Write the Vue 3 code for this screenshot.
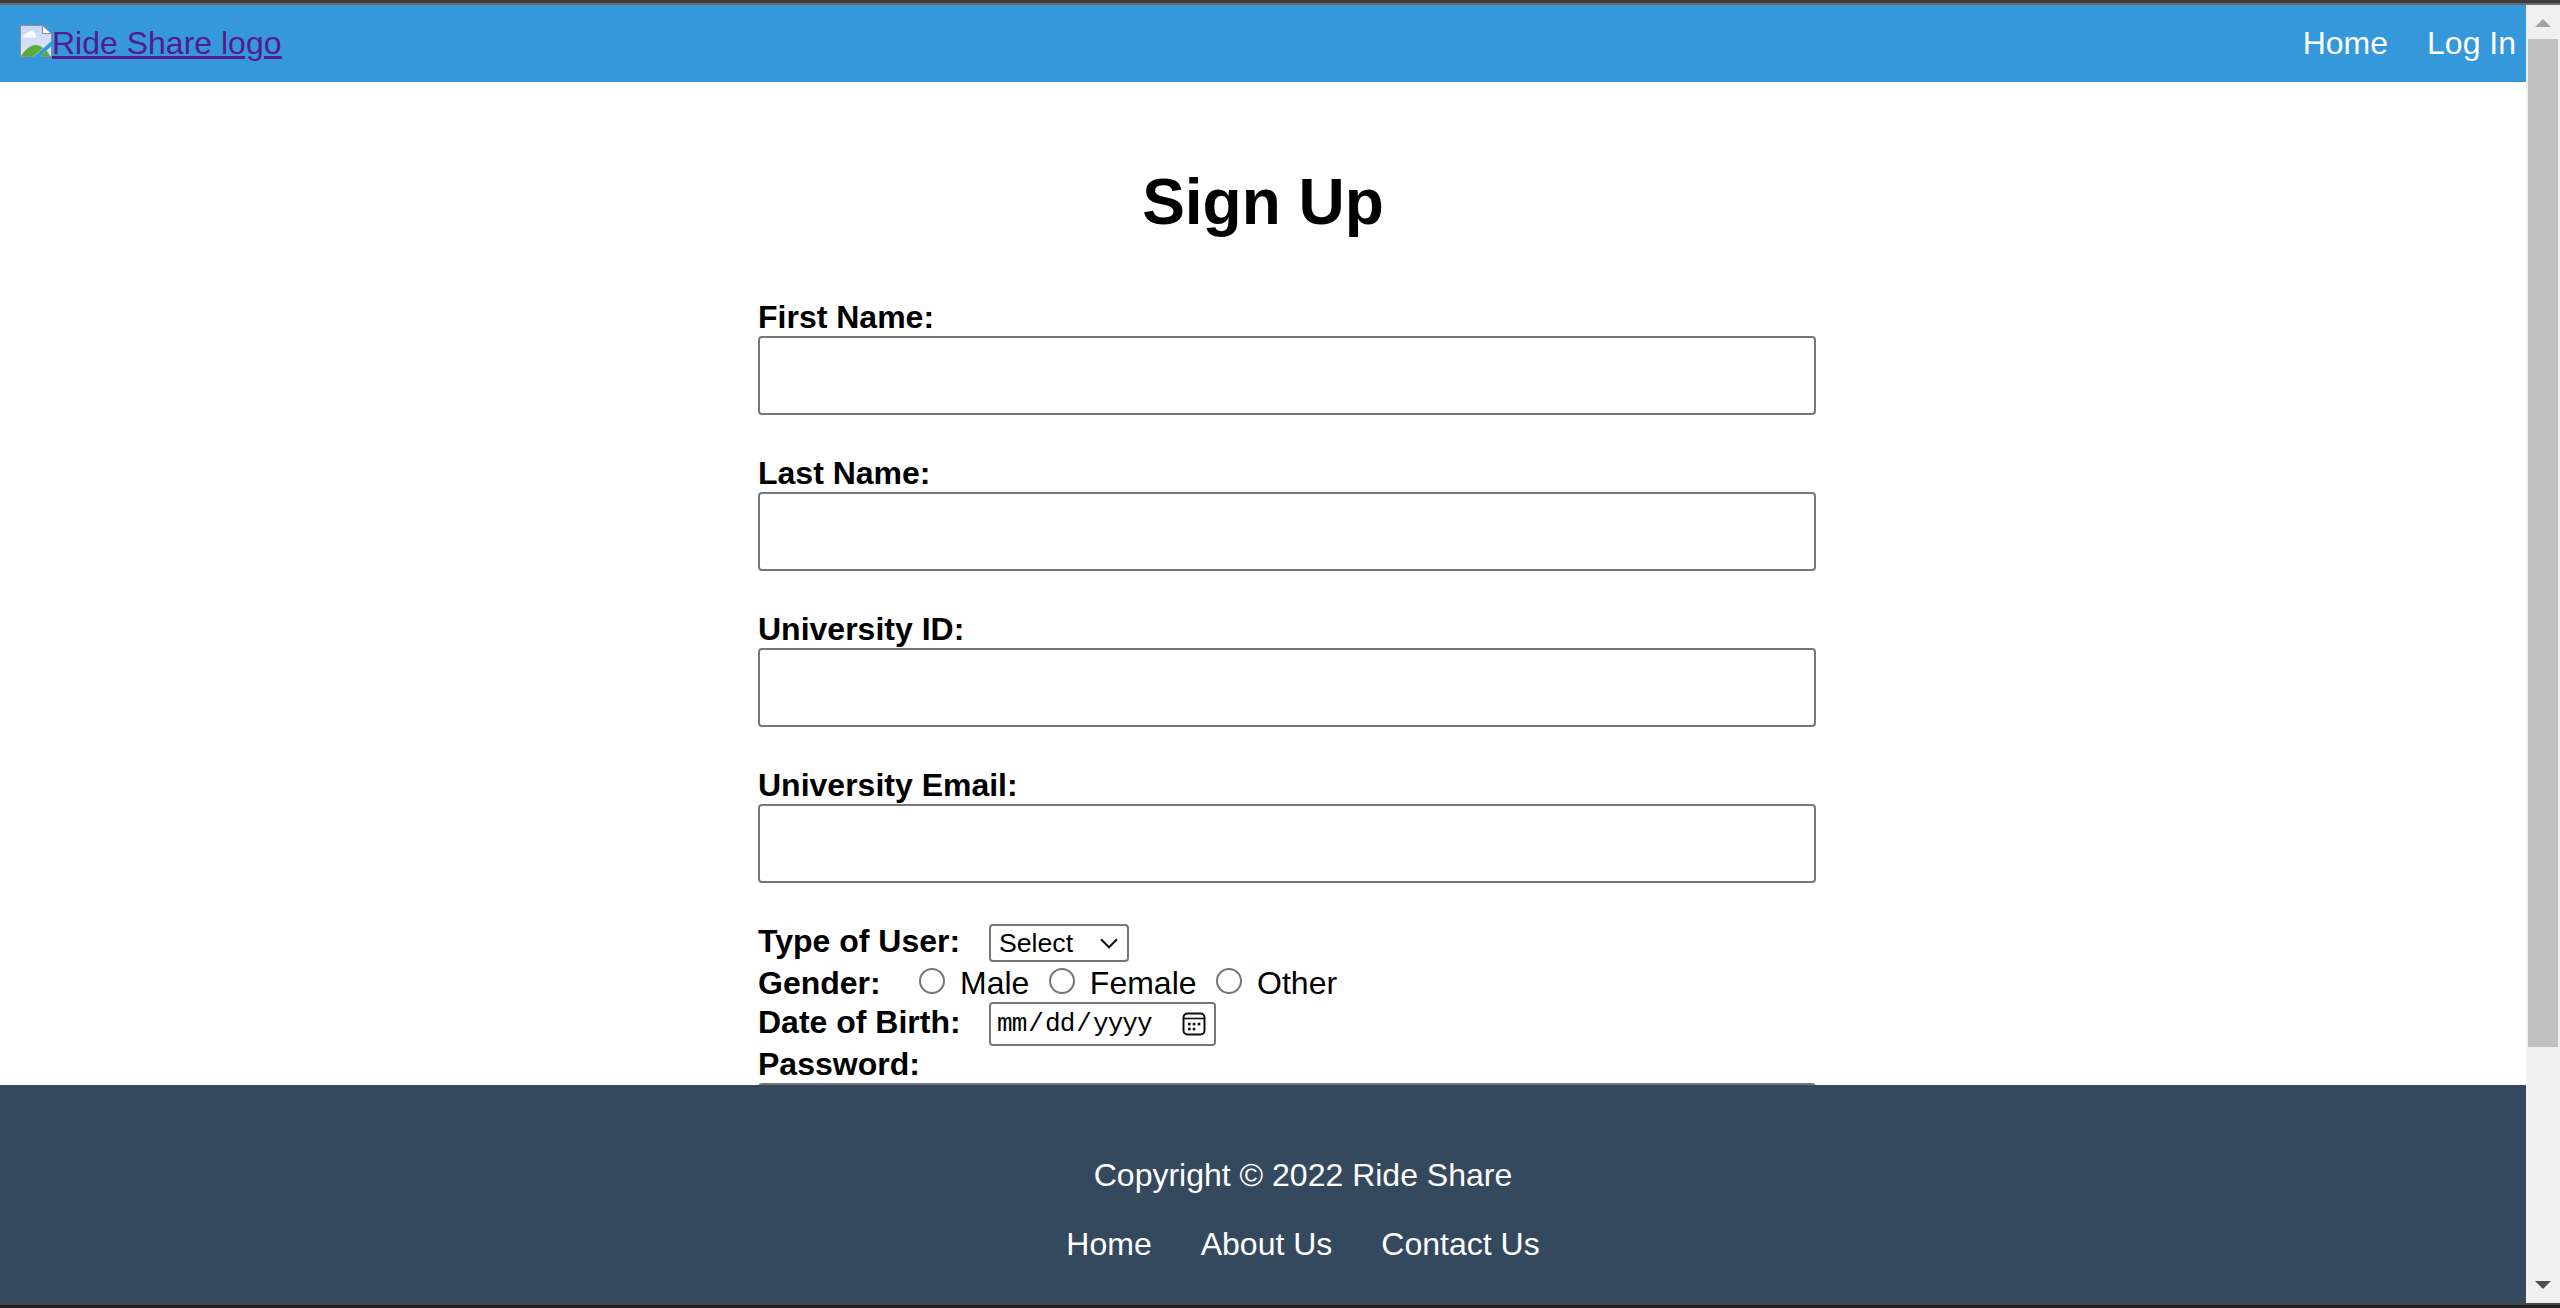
<script setup>
import { reactive } from 'vue'

const fields = [
  { id: 'firstName', label: 'First Name:', type: 'text' },
  { id: 'lastName', label: 'Last Name:', type: 'text' },
  { id: 'universityId', label: 'University ID:', type: 'text' },
  { id: 'email', label: 'University Email:', type: 'email' },
]
const genders = ['Male', 'Female', 'Other']
const navLinks = ['Home', 'Log In']
const footerLinks = ['Home', 'About Us', 'Contact Us']
const form = reactive({ firstName: '', lastName: '', universityId: '', email: '', gender: '', password: '' })
</script>

<template>
  <div class="window">
    <div class="edge-top"></div>
    <div class="viewport">
      <div class="page">
        <header class="header">
          <a class="logo" href="#">
            <svg class="broken" width="32" height="32" viewBox="0 0 32 32">
              <defs>
                <linearGradient id="sky" x1="0" y1="0" x2="0" y2="1">
                  <stop offset="0" stop-color="#c5d6f6" />
                  <stop offset="1" stop-color="#dfe8fb" />
                </linearGradient>
              </defs>
              <path d="M.5.5H22.500L31.500 8.500V16L14 31.500H.5Z" fill="url(#sky)" />
              <path d="M3 12.500c0-2 1.500-3.500 3.500-3.500C7.500 7 9 6 11 6c2.500 0 4 1.500 4.500 3.500 0 .8.500 1.500.5 3Z" fill="#fff" />
              <path d="M1 31C5 25 10 20 15.500 20c3 0 5.500 1 7.500 3L14 31Z" fill="#58ad38" />
              <path d="M21 31L27 26 30 31Z" fill="#58ad38" />
              <path d="M31 21.500V31H20.500Z" fill="#d5e1f8" />
              <path d="M20.500 31L26.500 25.800C28 27.500 29 29 30 31Z" fill="#58ad38" />
              <path d="M22.500 1V8.500H31.500Z" fill="#fff" />
              <path d="M14 31.500H.5V.5H22.500L31.500 8.500V16M22.500.5V8.500H31.500M31.500 21V31.500H20" fill="none" stroke="#8f8f8f" />
            </svg>
            <span class="logo-text">Ride Share logo</span>
          </a>
          <nav class="nav">
            <a v-for="link in navLinks" :key="link" href="#">{{ link }}</a>
          </nav>
        </header>

        <main class="main">
          <h1>Sign Up</h1>
          <form class="form" @submit.prevent>
            <div v-for="f in fields" :key="f.id" class="field">
              <label :for="f.id">{{ f.label }}</label>
              <input :id="f.id" v-model="form[f.id]" :type="f.type" />
            </div>
            <div class="row row-user">
              <label class="wide">Type of User:</label>
              <div class="select">
                <span>Select</span>
                <svg width="18" height="11" viewBox="0 0 18 11">
                  <path d="M1 1.300L9 9.300L17 1.300" fill="none" stroke="#101010" stroke-width="2" />
                </svg>
              </div>
            </div>
            <div class="row row-gender">
              <label class="narrow">Gender:</label>
              <div v-for="g in genders" :key="g" class="option">
                <span class="radio" role="radio" @click="form.gender = g"></span>
                <span>{{ g }}</span>
              </div>
            </div>
            <div class="row row-date">
              <label class="wide">Date of Birth:</label>
              <div class="date">
                <span class="date-text"><span>mm</span>/<span>dd</span>/<span>yyyy</span></span>
                <svg width="24" height="24" viewBox="0 0 24 24">
                  <rect x="1.500" y="1.500" width="21" height="21" rx="4" fill="none" stroke="#101010" stroke-width="2" />
                  <path d="M2 6.500H22" stroke="#101010" stroke-width="1.600" />
                  <g fill="#101010">
                    <circle cx="7.300" cy="12" r="1.500" /><circle cx="12" cy="12" r="1.500" /><circle cx="17" cy="12" r="1.500" />
                    <circle cx="7.300" cy="17" r="1.500" /><circle cx="12" cy="17" r="1.500" />
                  </g>
                </svg>
              </div>
            </div>
            <div class="field">
              <label for="password">Password:</label>
              <input id="password" v-model="form.password" type="password" />
            </div>
          </form>
        </main>

        <footer class="footer">
          <p>Copyright © 2022 Ride Share</p>
          <nav>
            <a v-for="link in footerLinks" :key="link" href="#">{{ link }}</a>
          </nav>
        </footer>
      </div>

      <div class="scrollbar">
        <svg width="16" height="8" viewBox="0 0 16 8"><path d="M8 0L16 8H0Z" fill="#a3a3a3" /></svg>
        <div class="thumb"></div>
        <svg class="down" width="16" height="8" viewBox="0 0 16 8"><path d="M0 0H16L8 8Z" fill="#505050" /></svg>
      </div>
    </div>
    <div class="edge-bottom"></div>
  </div>
</template>

<style>
body {
  margin: 0;
  overflow: hidden;
}
</style>

<style scoped>
* {
  box-sizing: border-box;
}
.window {
  width: 2560px;
  height: 1308px;
  display: flex;
  flex-direction: column;
  overflow: hidden;
  background: #fff;
  color: #000;
  font: 32px/36px "Liberation Sans", Arial, sans-serif;
}
.edge-top {
  flex: none;
  height: 5px;
  background: #3c3c3c;
  border-bottom: 2px solid #6a6a6a;
}
.edge-bottom {
  flex: none;
  height: 5px;
  background: #1f1f1f;
  border-top: 2px solid #444;
}
.viewport {
  display: flex;
  height: 1298px;
}
.page {
  width: 2526px;
  display: flex;
  flex-direction: column;
}
.header {
  flex: none;
  height: 77px;
  padding: 20px 10px 0 20px;
  display: flex;
  justify-content: space-between;
  align-items: flex-start;
  background: #3498db;
}
.logo {
  display: flex;
  color: #551a8b;
}
.logo-text {
  text-decoration: underline;
  text-decoration-thickness: 3px;
  text-underline-offset: 2px;
}
.nav {
  display: flex;
  gap: 39px;
}
.nav a,
.footer a {
  color: #fff;
  text-decoration: none;
}
.main {
  flex: 1;
  min-height: 0;
  overflow: hidden;
  padding-top: 84px;
}
h1 {
  margin: 0 0 61px;
  font-size: 64px;
  line-height: 72px;
  text-align: center;
}
.form {
  width: 1058px;
  margin-left: 758px;
}
label {
  display: block;
  font-weight: bold;
  white-space: nowrap;
}
.field {
  margin-bottom: 40px;
}
.field input {
  display: block;
  width: 1058px;
  height: 79px;
  margin: 1px 0 0;
  padding: 0 20px;
  border: 2px solid #767676;
  border-radius: 4px;
  outline: none;
  background: #fff;
  font: inherit;
}
.row {
  display: flex;
  align-items: flex-start;
}
.row-user {
  height: 42px;
}
.row-gender {
  height: 37px;
}
.row-date {
  height: 44px;
}
.row-date label {
  margin-top: 2px;
}
.wide {
  width: 231px;
}
.narrow {
  width: 161px;
}
.select {
  width: 140px;
  height: 38px;
  margin-top: 1px;
  padding: 0 9px 0 8px;
  display: flex;
  align-items: center;
  justify-content: space-between;
  border: 2px solid #767676;
  border-radius: 4px;
  font-size: 26.67px;
}
.option {
  display: flex;
  margin-right: 19.500px;
}
.radio {
  width: 26px;
  height: 26px;
  margin: 3px 15px 0 0;
  border: 2px solid #767676;
  border-radius: 50%;
}
.date {
  width: 227px;
  height: 44px;
  padding: 0 8px 0 4px;
  display: flex;
  align-items: center;
  justify-content: space-between;
  border: 2px solid #767676;
  border-radius: 4px;
}
.date-text {
  font: 26px/36px "Liberation Mono", monospace;
  letter-spacing: -0.940px;
}
.date-text span {
  padding: 0 2px;
}
.footer {
  flex: none;
  height: 218px;
  padding: 72px 0 0 80px;
  background: #34495e;
  color: #fff;
  text-align: center;
}
.footer p {
  margin: 0 0 33px;
}
.footer nav {
  display: flex;
  justify-content: center;
  gap: 49px;
}
.scrollbar {
  width: 34px;
  display: flex;
  flex-direction: column;
  align-items: center;
  padding: 14px 0;
  background: #f0f0f0;
}
.thumb {
  width: 30px;
  height: 1008px;
  margin-top: 12px;
  background: #c1c1c1;
}
.down {
  margin-top: auto;
}
</style>
